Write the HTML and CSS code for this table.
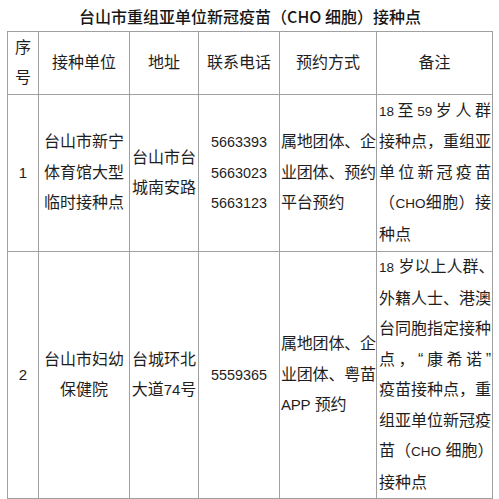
FILE: index.html
```html
<!DOCTYPE html>
<html lang="zh-CN">
<head>
<meta charset="utf-8">
<link rel="stylesheet" href="styles.css">
</head>
<body>
<div class="title">台山市重组亚单位新冠疫苗（CHO 细胞）接种点</div>
<table class="grid">
  <colgroup>
    <col class="c1"><col class="c2"><col class="c3"><col class="c4"><col class="c5"><col class="c6">
  </colgroup>
  <tr class="head">
    <th>序<br>号</th>
    <th>接种单位</th>
    <th>地址</th>
    <th>联系电话</th>
    <th>预约方式</th>
    <th>备注</th>
  </tr>
  <tr class="r1">
    <td class="num">1</td>
    <td>台山市新宁<br>体育馆大型<br>临时接种点</td>
    <td>台山市台<br>城南安路</td>
    <td class="phone">5663393<br>5663023<br>5663123</td>
    <td class="left">属地团体、企<br>业团体、预约<br>平台预约</td>
    <td class="note">
      <div class="jl"><span class="d">18</span>至<span class="d">59</span>岁人群</div>
      <div class="jl">接种点，重组亚</div>
      <div class="jl">单位新冠疫苗</div>
      <div class="jl">（<span class="d">CHO</span>细胞）接</div>
      <div>种点</div>
    </td>
  </tr>
  <tr class="r2">
    <td class="num">2</td>
    <td>台山市妇幼<br>保健院</td>
    <td>台城环北<br>大道<span class="d2">74</span>号</td>
    <td class="phone">5559365</td>
    <td class="left">属地团体、企<br>业团体、粤苗<br><span class="d2">APP</span> 预约</td>
    <td class="note">
      <div><span class="d">18</span> 岁以上人群、</div>
      <div class="jl">外籍人士、港澳</div>
      <div class="jl">台同胞指定接种</div>
      <div class="jl">点，“康希诺”</div>
      <div class="jl">疫苗接种点，重</div>
      <div class="jl">组亚单位新冠疫</div>
      <div class="jl">苗（<span class="d">CHO</span> 细胞）</div>
      <div>接种点</div>
    </td>
  </tr>
</table>
</body>
</html>
```
FILE: styles.css
```css
body {
  margin: 0;
  background: #ffffff;
  color: #1e1e1e;
  font-family: "Liberation Sans", "Noto Sans CJK SC", sans-serif;
}

.title {
  height: 31px;
  display: flex;
  align-items: center;
  justify-content: center;
  font-family: "Noto Sans CJK SC", sans-serif;
  font-size: 16px;
  font-weight: 500;
  color: #161616;
  padding-left: 1px;
}

.grid {
  margin-left: 7px;
  border-collapse: collapse;
  table-layout: fixed;
  width: 485px;
}

.c1 { width: 31px; }
.c2 { width: 91px; }
.c3 { width: 69px; }
.c4 { width: 81px; }
.c5 { width: 97px; }
.c6 { width: 116px; }

.grid th,
.grid td {
  border: 1px solid #a0a0a0;
  padding: 0 1px;
  font-size: 16px;
  font-weight: normal;
  line-height: 30.5px;
  text-align: center;
  vertical-align: middle;
}

.head { height: 63px; }
.r1 { height: 157px; }
.r2 { height: 246px; }

.grid .num { font-size: 15px; }

.grid .phone { font-size: 14.4px; line-height: 30.7px; }

.grid .left {
  text-align: left;
  padding: 0 0 0 1px;
  white-space: nowrap;
  letter-spacing: -0.2px;
}

.grid .note { text-align: left; padding: 0 1px 0 2px; }

.note div { white-space: nowrap; }

.note .jl {
  text-align: justify;
  text-align-last: justify;
}

.d { font-size: 13.5px; }
.d2 { font-size: 15px; }
```
